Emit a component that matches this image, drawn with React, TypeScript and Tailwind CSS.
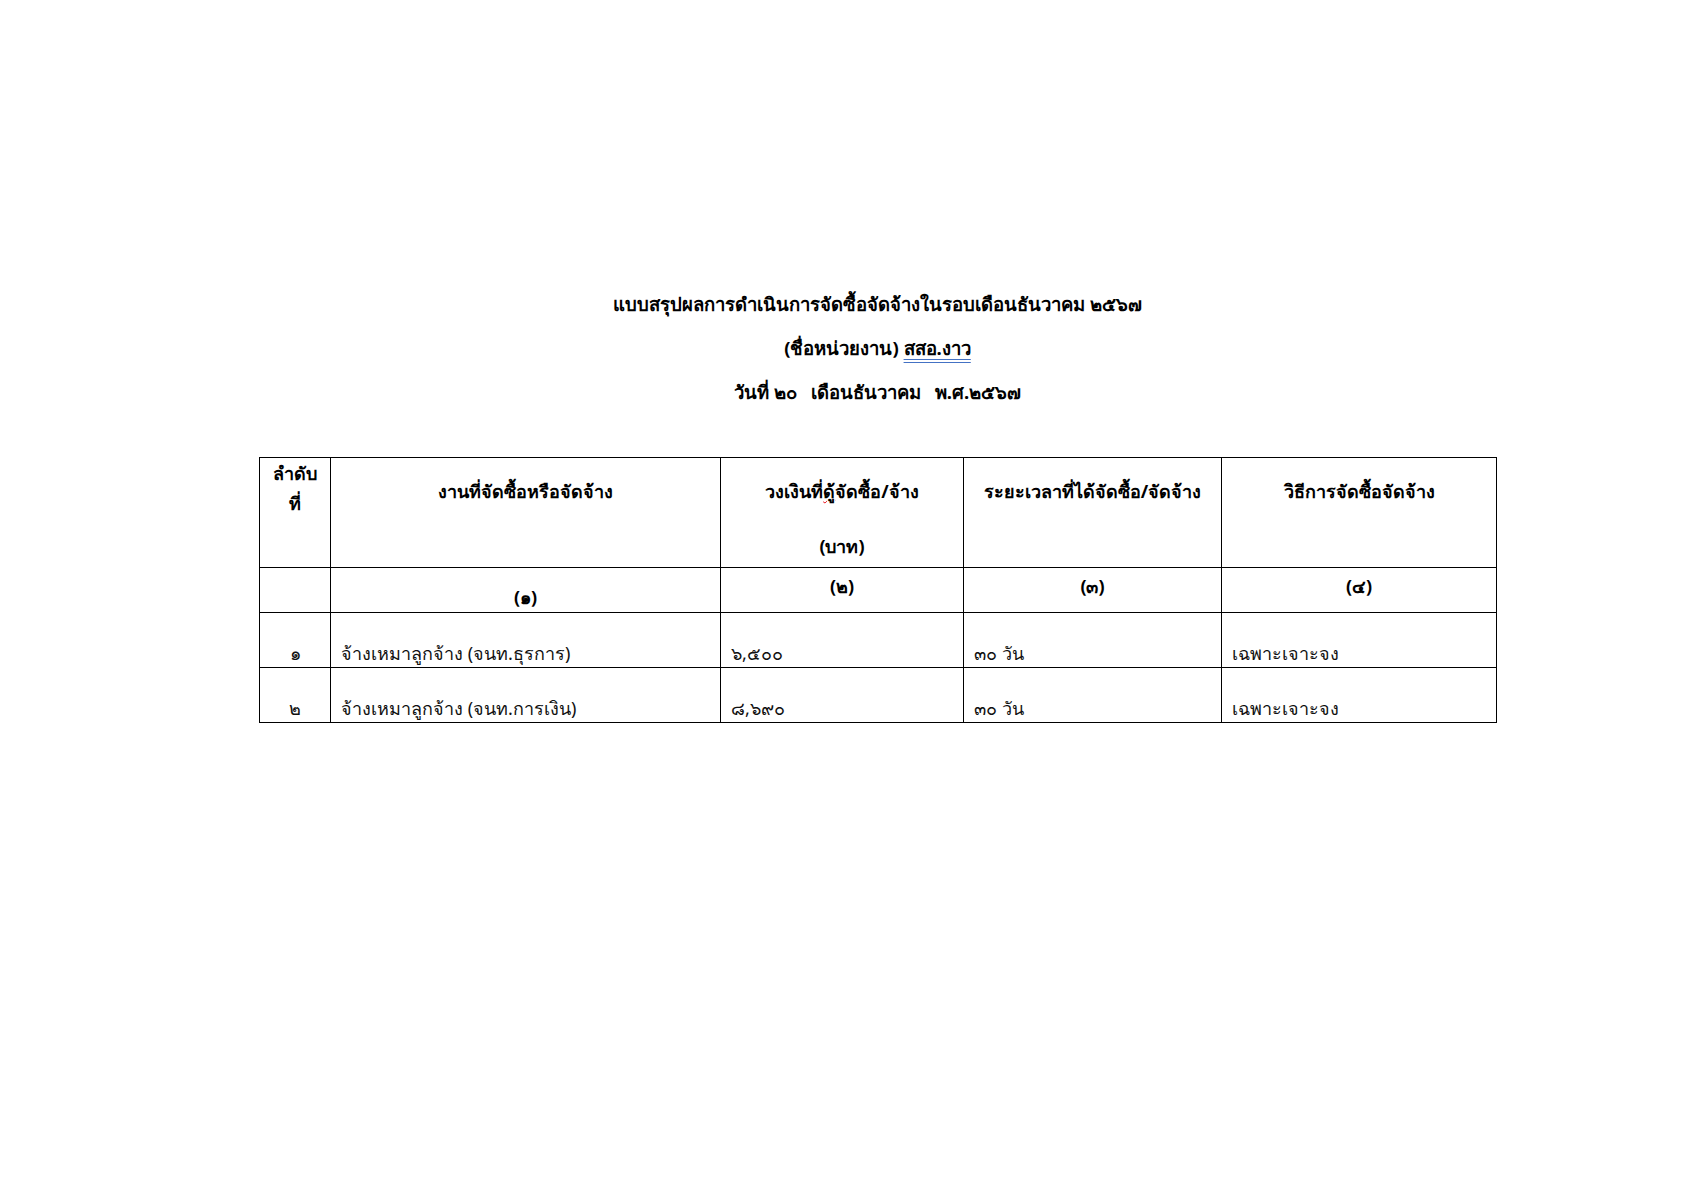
import React from "react";

const F = { fontFamily: '"Noto Sans", "Liberation Sans", sans-serif' };

export default function App() {
  return (
    <div className="w-[1683px] h-[1190px] bg-white text-black" style={F}>
      <div className="pt-[287px] pl-[259px] w-[1496px]">
        <div className="flex flex-col items-center text-[18.5px] font-bold leading-[34px] gap-[10px]">
          <div>แบบสรุปผลการดำเนินการจัดซื้อจัดจ้างในรอบเดือนธันวาคม ๒๕๖๗</div>
          <div>
            (ชื่อหน่วยงาน){" "}
            <span className="underline decoration-double decoration-[#4472c4] underline-offset-4">สสอ.งาว</span>
          </div>
          <div className="flex gap-[14px]">
            <span>วันที่ ๒๐</span>
            <span>เดือนธันวาคม</span>
            <span>พ.ศ.๒๕๖๗</span>
          </div>
        </div>
        <table className="mt-[48px] border-collapse table-fixed w-[1237px] text-[18px]">
          <colgroup>
            <col className="w-[71px]" />
            <col className="w-[390px]" />
            <col className="w-[243px]" />
            <col className="w-[258px]" />
            <col className="w-[275px]" />
          </colgroup>
          <tbody>
            <tr className="h-[110px] font-bold align-top">
              <td className="border border-black text-center pt-0 leading-[30px]">
                ลำดับ
                <br />
                ที่
              </td>
              <td className="border border-black text-center pt-[18px] leading-[30px]">งานที่จัดซื้อหรือจัดจ้าง</td>
              <td className="border border-black text-center pt-[18px] leading-[30px]">
                <div>
                  วงเงินที่
                  <span className="underline decoration-wavy decoration-red-600 decoration-1">ดู้</span>
                  จัดซื้อ/จ้าง
                </div>
                <div className="mt-[25px]">(บาท)</div>
              </td>
              <td className="border border-black text-center pt-[18px] leading-[30px]">ระยะเวลาที่ได้จัดซื้อ/จัดจ้าง</td>
              <td className="border border-black text-center pt-[18px] leading-[30px]">วิธีการจัดซื้อจัดจ้าง</td>
            </tr>
            <tr className="h-[44px] font-bold align-top">
              <td className="border border-black"></td>
              <td className="border border-black text-center pt-[14px] leading-[30px]">(๑)</td>
              <td className="border border-black text-center pt-[3px] leading-[30px]">(๒)</td>
              <td className="border border-black text-center pt-[3px] leading-[30px]">(๓)</td>
              <td className="border border-black text-center pt-[3px] leading-[30px]">(๔)</td>
            </tr>
            <tr className="h-[55px] align-bottom leading-[28px] text-[#111]">
              <td className="border border-black text-center">๑</td>
              <td className="border border-black px-[10px]">จ้างเหมาลูกจ้าง (จนท.ธุรการ)</td>
              <td className="border border-black px-[10px]">๖,๕๐๐</td>
              <td className="border border-black px-[10px]">๓๐ วัน</td>
              <td className="border border-black px-[10px]">เฉพาะเจาะจง</td>
            </tr>
            <tr className="h-[55px] align-bottom leading-[28px] text-[#111]">
              <td className="border border-black text-center">๒</td>
              <td className="border border-black px-[10px]">จ้างเหมาลูกจ้าง (จนท.การเงิน)</td>
              <td className="border border-black px-[10px]">๘,๖๙๐</td>
              <td className="border border-black px-[10px]">๓๐ วัน</td>
              <td className="border border-black px-[10px]">เฉพาะเจาะจง</td>
            </tr>
          </tbody>
        </table>
      </div>
    </div>
  );
}
